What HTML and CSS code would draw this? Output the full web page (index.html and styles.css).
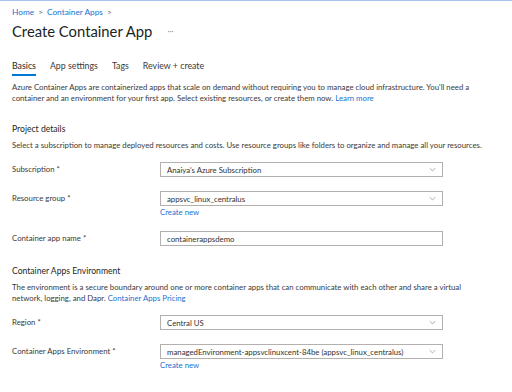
FILE: index.html
```html
<!DOCTYPE html>
<html lang="en">
<head>
  <meta charset="UTF-8" />
  <title>Create Container App</title>
  <link rel="stylesheet" href="styles.css">
</head>
<body>
  <div class="page">
    <div class="breadcrumb">
      <a>Home</a><span class="sep">&gt;</span><a>Container Apps</a><span class="sep">&gt;</span>
    </div>
    <div class="title-row">
      <h1>Create Container App</h1>
      <span class="more">···</span>
    </div>

    <div class="tabs">
      <span class="tab active">Basics</span>
      <span class="tab">App settings</span>
      <span class="tab">Tags</span>
      <span class="tab">Review + create</span>
    </div>

    <p class="intro">Azure Container Apps are containerized apps that scale on demand without requiring you to manage cloud infrastructure. You'll need a container and an environment for your first app. Select existing resources, or create them now. <a>Learn more</a></p>

    <h2>Project details</h2>
    <p class="desc">Select a subscription to manage deployed resources and costs. Use resource groups like folders to organize and manage all your resources.</p>

    <div class="field first">
      <label>Subscription *</label>
      <div class="control">
        <div class="select">Anaiya's Azure Subscription<svg viewBox="0 0 10 6"><path d="M1 1l4 4 4-4" /></svg></div>
      </div>
    </div>
    <div class="field">
      <label>Resource group *</label>
      <div class="control">
        <div class="select">appsvc_linux_centralus<svg viewBox="0 0 10 6"><path d="M1 1l4 4 4-4" /></svg></div>
        <a class="create">Create new</a>
      </div>
    </div>
    <div class="field after-create">
      <label>Container app name *</label>
      <div class="control">
        <div class="select input">containerappsdemo</div>
      </div>
    </div>

    <h2>Container Apps Environment</h2>
    <p class="desc">The environment is a secure boundary around one or more container apps that can communicate with each other and share a virtual network, logging, and Dapr. <a>Container Apps Pricing</a></p>

    <div class="field first">
      <label>Region *</label>
      <div class="control">
        <div class="select">Central US<svg viewBox="0 0 10 6"><path d="M1 1l4 4 4-4" /></svg></div>
      </div>
    </div>
    <div class="field">
      <label>Container Apps Environment *</label>
      <div class="control">
        <div class="select">managedEnvironment-appsvclinuxcent-84be (appsvc_linux_centralus)<svg viewBox="0 0 10 6"><path d="M1 1l4 4 4-4" /></svg></div>
        <a class="create">Create new</a>
      </div>
    </div>
  </div>
</body>
</html>
```

FILE: styles.css
```css
body {
  margin: 0;
  background: #fff;
  color: #3b3a39;
  font-family: 'Lato', 'Open Sans', sans-serif;
  font-size: 7.8px;
  border-top: 1px solid #a9c1ee;
}
a {
  color: #1a73d0;
}
.page {
  padding: 0 12px;
}
.breadcrumb {
  margin-top: 5px;
  height: 12px;
  line-height: 12px;
  font-size: 8.3px;
}
.breadcrumb .sep {
  color: #605e5c;
  margin: 0 4px;
}
.title-row {
  display: flex;
  align-items: center;
  margin-top: 2px;
  height: 22px;
}
h1 {
  margin: 0;
  font-size: 14.8px;
  font-weight: 400;
  color: #201f1e;
}
.more {
  margin-left: 15px;
  color: #8a8886;
  font-size: 8px;
}
.tabs {
  display: flex;
  gap: 14px;
  margin-top: 18px;
  font-size: 8.8px;
  line-height: 12px;
}
.tab {
  padding-bottom: 2px;
  border-bottom: 2px solid transparent;
}
.tab.active {
  border-bottom-color: #0078d4;
  color: #201f1e;
}
.intro {
  margin: 6px 0 0;
  line-height: 11px;
  width: 470px;
}
h2 {
  margin: 19px 0 0;
  font-size: 8.6px;
  line-height: 12px;
  font-weight: 400;
  color: #201f1e;
}
.desc {
  margin: 5px 0 0;
  line-height: 11px;
  width: 470px;
}
.field {
  display: flex;
  margin-top: 14px;
}
.field.first {
  margin-top: 11px;
}
.field.after-create {
  margin-top: 13px;
}
label {
  width: 148px;
  line-height: 15px;
}
.control {
  display: flex;
  flex-direction: column;
}
.select {
  width: 269px;
  height: 13px;
  border: 1px solid #b3b0ad;
  padding: 0 6px;
  display: flex;
  align-items: center;
  justify-content: space-between;
  color: #323130;
}
.select svg {
  width: 7px;
  height: 5px;
  fill: none;
  stroke: #8a8886;
  stroke-width: 1;
}
.create {
  margin-top: 1px;
  line-height: 11px;
}
```
